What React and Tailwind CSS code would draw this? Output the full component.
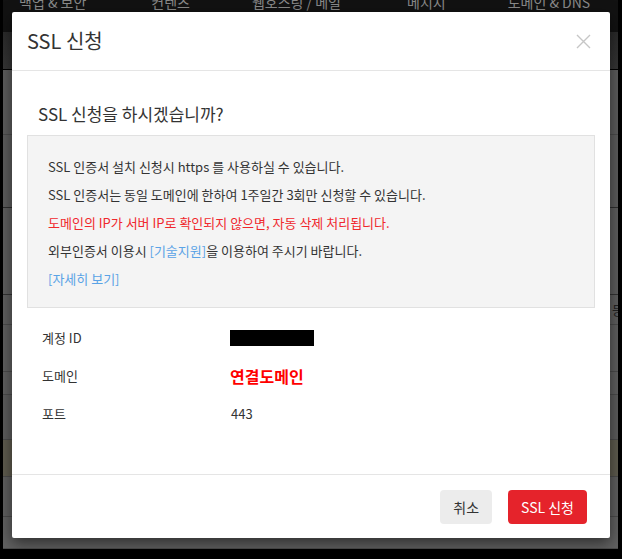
import React from 'react'

const font = "font-['Noto_Sans_CJK_KR','Noto_Sans',sans-serif]"

const navItems = [
    { label: '백업 & 보안', ml: 'ml-[16px]' },
    { label: '컨텐츠', ml: 'ml-[65px]' },
    { label: '웹호스팅 / 메일', ml: 'ml-[62px]' },
    { label: '메시지', ml: 'ml-[66px]' },
    { label: '도메인 & DNS', ml: 'ml-[62px]' },
]

// background table rows behind the overlay
const rows = [
    { h: 'h-[65px]', bg: 'bg-[#5d5d5d]', line: 'border-[#4c4c4c]' },
    { h: 'h-[73px]', bg: 'bg-[#5d5d5d]', line: 'border-[#2e2e2e]' },
    { h: 'h-[87px]', bg: 'bg-[#5f5f5f]', line: 'border-[#333333]' },
    { h: 'h-[30px]', bg: 'bg-[#606060]', line: 'border-[#4c4c4c]' },
    { h: 'h-[47px]', bg: 'bg-[#606060]', line: 'border-[#4c4c4c]' },
    { h: 'h-[23px]', bg: 'bg-[#606060]', line: 'border-[#4c4c4c]' },
    { h: 'h-[45px]', bg: 'bg-[#5d5d5d]', line: 'border-[#4c4c4c]' },
    { h: 'h-[37px]', bg: 'bg-[#5f5c4f]', line: 'border-[#4c4c4c]' },
    { h: 'h-[40px]', bg: 'bg-[#606060]', line: 'border-[#4c4c4c]' },
    { h: 'h-[32px]', bg: 'bg-[#626262]', line: 'border-[#4c4c4c]' },
]

function Background() {
    return (
        <div className="ml-[3px] mr-[4px] h-[552px] flex flex-col overflow-hidden">
            <div className="h-[32px] bg-[#121212] flex items-start overflow-hidden">
                {navItems.map((item) => (
                    <span
                        key={item.label}
                        className={`${item.ml} -mt-[8px] text-[14px] leading-[20px] text-[#8a8a8a] whitespace-nowrap`}
                    >
                        {item.label}
                    </span>
                ))}
            </div>
            <div className="h-[38px] bg-gradient-to-b from-[#2b2b2b] to-[#363636] border-b border-black" />
            {rows.map((row, i) => (
                <div key={i} className={`${row.h} ${row.bg} border-b ${row.line} flex justify-end items-center`}>
                    {i === 3 && (
                        <span className="text-[13px] text-[#222] -mr-[6px]">등</span>
                    )}
                </div>
            ))}
        </div>
    )
}

function CloseIcon() {
    return (
        <svg width="15" height="15" viewBox="0 0 15 15" fill="none">
            <path d="M1 1L14 14M14 1L1 14" stroke="#c6c6c6" strokeWidth="1.4" />
        </svg>
    )
}

export default function App() {
    return (
        <div className={`relative w-[622px] h-[559px] bg-black overflow-hidden ${font}`}>
            <Background />

            <div className="absolute inset-0 pl-[12px] pt-[12px]">
                <div className="w-[598px] h-[526px] bg-white rounded-[2px] shadow-[0_5px_15px_rgba(0,0,0,0.55)] flex flex-col text-[#333]">
                    {/* header */}
                    <div className="h-[59px] shrink-0 border-b border-[#e5e5e5] flex items-center justify-between pl-[15px] pr-[19px]">
                        <h1 className="text-[20px] leading-[28px] text-[#333]">SSL 신청</h1>
                        <button className="mt-[1px]">
                            <CloseIcon />
                        </button>
                    </div>

                    {/* body */}
                    <div className="flex-1 pt-[31px] px-[15px]">
                        <h2 className="pl-[11px] text-[17px] leading-[24px] text-[#333] mb-[9px]">
                            SSL 신청을 하시겠습니까?
                        </h2>

                        <div className="bg-[#f4f4f4] border border-[#e1e1e1] pt-[17px] pb-[14px] pl-[20px] text-[13px] leading-[28px]">
                            <p>SSL 인증서 설치 신청시 https 를 사용하실 수 있습니다.</p>
                            <p>SSL 인증서는 동일 도메인에 한하여 1주일간 3회만 신청할 수 있습니다.</p>
                            <p className="text-[#f0282d]">도메인의 IP가 서버 IP로 확인되지 않으면, 자동 삭제 처리됩니다.</p>
                            <p>
                                외부인증서 이용시 <span className="text-[#5aa3e6]">[기술지원]</span>을 이용하여 주시기 바랍니다.
                            </p>
                            <p className="text-[#5aa3e6]">[자세히 보기]</p>
                        </div>

                        <div className="mt-[11px] pl-[15px] text-[13px]">
                            <div className="h-[38px] flex items-center">
                                <span className="w-[188px]">계정 ID</span>
                                <span className="w-[84px] h-[16px] bg-black" />
                            </div>
                            <div className="h-[38px] flex items-center">
                                <span className="w-[188px]">도메인</span>
                                <span className="text-[16px] font-bold text-[#ff0000]">연결도메인</span>
                            </div>
                            <div className="h-[38px] flex items-center">
                                <span className="w-[188px]">포트</span>
                                <span className="pl-[1px]">443</span>
                            </div>
                        </div>
                    </div>

                    {/* footer */}
                    <div className="h-[64px] shrink-0 border-t border-[#e5e5e5] flex items-start justify-end gap-[16px] pt-[15px] pr-[23px]">
                        <button className="h-[34px] px-[13px] rounded-[4px] bg-[#ececec] text-[14px] text-[#333]">
                            취소
                        </button>
                        <button className="h-[34px] px-[13px] rounded-[4px] bg-[#e5232b] text-[14px] text-white">
                            SSL 신청
                        </button>
                    </div>
                </div>
            </div>
        </div>
    )
}
